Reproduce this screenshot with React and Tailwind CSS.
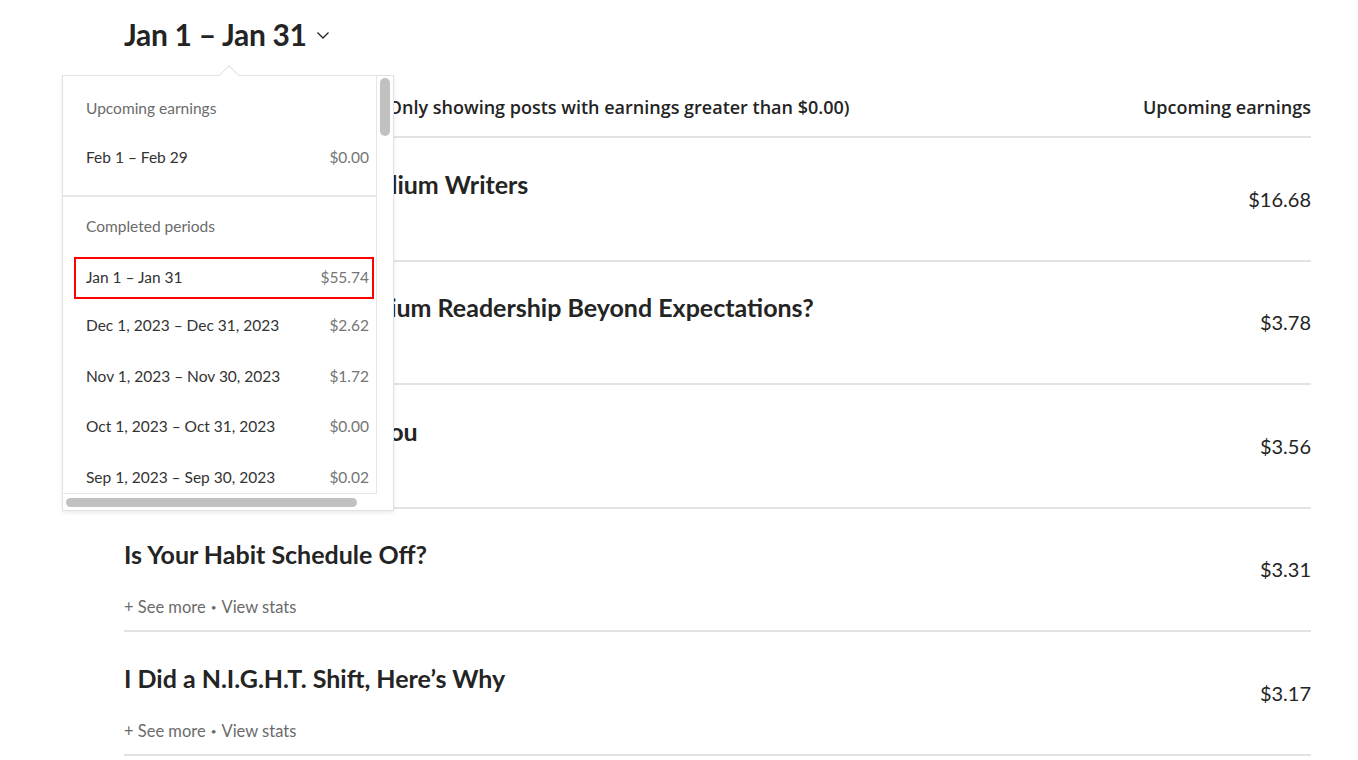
import React from "react";

const rows = [
  { title: "The Hard Truths for Medium Writers", amount: "$16.68" },
  { title: "How to Boost Your Medium Readership Beyond Expectations?", amount: "$3.78" },
  { title: "Why the World Needs You", amount: "$3.56" },
  { title: "Is Your Habit Schedule Off?", amount: "$3.31" },
  { title: "I Did a N.I.G.H.T. Shift, Here’s Why", amount: "$3.17" },
];

const periods = [
  { label: "Dec 1, 2023 – Dec 31, 2023", amount: "$2.62" },
  { label: "Nov 1, 2023 – Nov 30, 2023", amount: "$1.72" },
  { label: "Oct 1, 2023 – Oct 31, 2023", amount: "$0.00" },
  { label: "Sep 1, 2023 – Sep 30, 2023", amount: "$0.02" },
];

function Dropdown() {
  return (
    <div className="absolute left-[62px] top-[75px] w-[332px] h-[436px] bg-white border border-[#e2e2e2] shadow-[0_2px_4px_rgba(0,0,0,0.08)]">
      <div className="absolute left-[159px] top-[-8px] w-[14px] h-[14px] rotate-45 bg-white border-l border-t border-[#e2e2e2]" />
      <div className="relative flex h-full">
        <div className="flex flex-col w-[314px] h-[418px] overflow-hidden border-r border-b border-[#e6e6e6] text-[15.5px] leading-[20px]">
          <div className="pt-[22px] pl-[23px] pr-[7px] text-[#6b6b6b]">Upcoming earnings</div>
          <div className="mt-[29px] pl-[23px] pr-[7px] flex justify-between">
            <span className="text-[#333]">Feb 1 – Feb 29</span>
            <span className="text-[#757575]">$0.00</span>
          </div>
          <div className="mt-[28px] border-b-2 border-[#e6e6e6]" />
          <div className="pt-[19px] pl-[23px] pr-[7px] text-[#6b6b6b]">Completed periods</div>
          <div className="mt-[21px] ml-[11px] mr-[2px] h-[42px] border-2 border-[#ff0000] pl-[10px] pr-[3px] flex items-center justify-between">
            <span className="text-[#333] -mt-[3px]">Jan 1 – Jan 31</span>
            <span className="text-[#757575] -mt-[3px]">$55.74</span>
          </div>
          <div className="flex flex-col gap-[30.5px] mt-[16px]">
            {periods.map((p) => (
              <div key={p.label} className="pl-[23px] pr-[7px] flex justify-between">
                <span className="text-[#333]">{p.label}</span>
                <span className="text-[#757575]">{p.amount}</span>
              </div>
            ))}
          </div>
        </div>
        <div className="flex-1 pt-[2px] flex justify-center">
          <div className="w-[10px] h-[58px] rounded-full bg-[#c1c1c1]" />
        </div>
      </div>
      <div className="absolute left-[3px] top-[422px] w-[291px] h-[9px] rounded-full bg-[#c1c1c1]" />
    </div>
  );
}

export default function App() {
  return (
    <div className="relative w-[1358px] h-[760px] overflow-hidden bg-white text-[#242424]" style={{ fontFamily: "Lato, 'Noto Sans', sans-serif" }}>
      <div className="pl-[124px] pr-[47px]">
        <div className="pt-[14px] flex items-center gap-[9px]">
          <h1 className="text-[30px] leading-[40px] font-bold tracking-[-0.3px]">Jan 1 – Jan 31</h1>
          <svg width="14" height="10" viewBox="0 0 14 10" className="mt-[2px]">
            <polyline points="1.5,2.5 7,8 12.5,2.5" fill="none" stroke="#242424" strokeWidth="1.3" />
          </svg>
        </div>
        <div
          className="mt-[31px] h-[53px] pt-[10px] flex items-start justify-between border-b-2 border-[#e2e2e2] text-[18px] leading-[24px] font-semibold"
          style={{ fontFamily: "'Open Sans', sans-serif" }}
        >
          <span>Story earnings for this period (Only showing posts with earnings greater than $0.00)</span>
          <span>Upcoming earnings</span>
        </div>
        {rows.map((r) => (
          <div key={r.title} className="h-[123.5px] flex items-center justify-between border-b-2 border-[#e2e2e2]">
            <div className="flex flex-col self-start pt-[30.5px]">
              <div className="text-[25px] leading-[30px] font-bold">{r.title}</div>
              <div className="mt-[28px] text-[16.5px] leading-[20px] text-[#6b6b6b] flex items-center">
                <span>+ See more</span>
                <span className="text-[10px] mx-[5px]">•</span>
                <span>View stats</span>
              </div>
            </div>
            <div className="text-[20px] leading-[26px]">{r.amount}</div>
          </div>
        ))}
      </div>
      <Dropdown />
    </div>
  );
}
